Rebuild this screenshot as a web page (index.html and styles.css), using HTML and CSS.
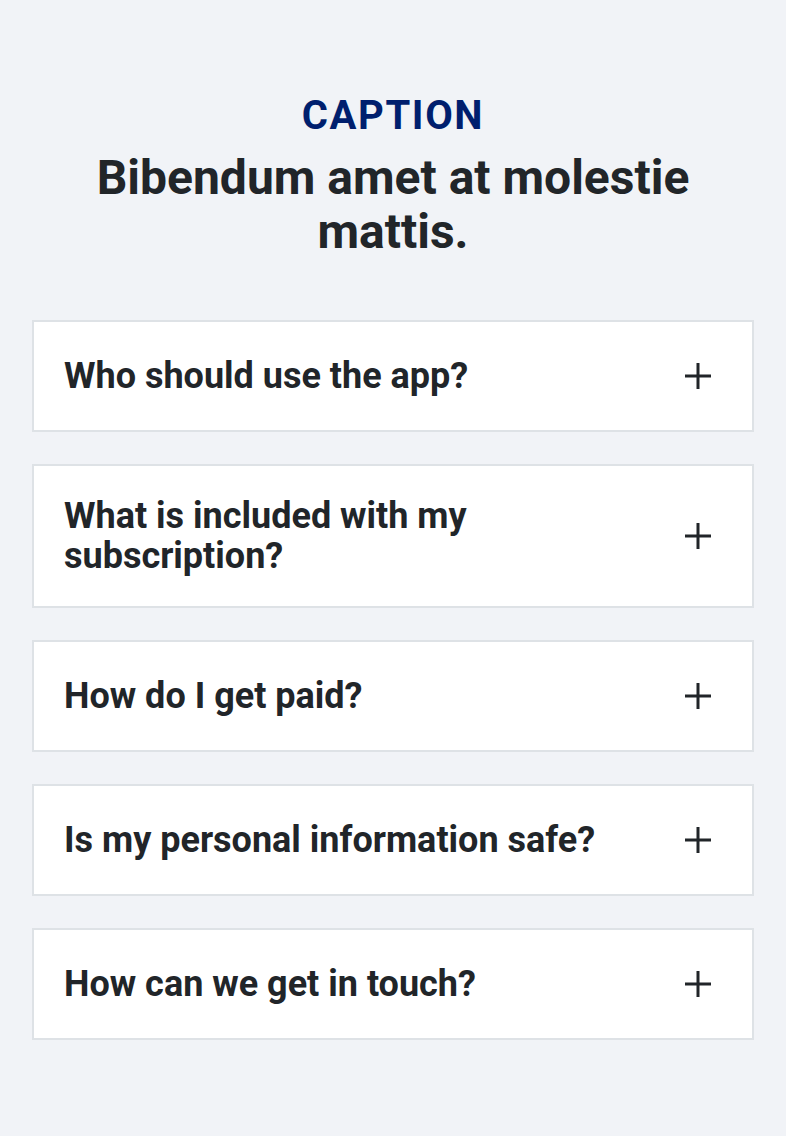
FILE: index.html
```html
<!DOCTYPE html>
<html lang="en">
<head>
<meta charset="utf-8">
<title>FAQ</title>
<link rel="stylesheet" href="styles.css">
</head>
<body>
<section class="faq">
  <header class="faq-head">
    <p class="caption">CAPTION</p>
    <h1 class="title">Bibendum amet at molestie mattis.</h1>
  </header>
  <div class="list">
    <div class="item"><span class="q">Who should use the app?</span><span class="icon"><svg viewBox="0 0 28 28" width="28" height="28"><path d="M14 1v26M1 14h26" stroke="#212529" stroke-width="3" fill="none"/></svg></span></div>
    <div class="item"><span class="q">What is included with my subscription?</span><span class="icon"><svg viewBox="0 0 28 28" width="28" height="28"><path d="M14 1v26M1 14h26" stroke="#212529" stroke-width="3" fill="none"/></svg></span></div>
    <div class="item"><span class="q">How do I get paid?</span><span class="icon"><svg viewBox="0 0 28 28" width="28" height="28"><path d="M14 1v26M1 14h26" stroke="#212529" stroke-width="3" fill="none"/></svg></span></div>
    <div class="item"><span class="q">Is my personal information safe?</span><span class="icon"><svg viewBox="0 0 28 28" width="28" height="28"><path d="M14 1v26M1 14h26" stroke="#212529" stroke-width="3" fill="none"/></svg></span></div>
    <div class="item"><span class="q">How can we get in touch?</span><span class="icon"><svg viewBox="0 0 28 28" width="28" height="28"><path d="M14 1v26M1 14h26" stroke="#212529" stroke-width="3" fill="none"/></svg></span></div>
  </div>
</section>
</body>
</html>
```
FILE: styles.css
```css
html, body {
  margin: 0;
  padding: 0;
  background: #f1f3f7;
  font-family: Roboto, "Liberation Sans", sans-serif;
  color: #212529;
}
.faq {
  padding: 92px 32px 96px;
}
.faq-head {
  text-align: center;
  margin-bottom: 61px;
}
.caption {
  margin: 0;
  font-size: 40px;
  line-height: 48px;
  font-weight: 700;
  letter-spacing: 1.6px;
  color: #001f6e;
}
.title {
  margin: 11px 0 0;
  font-size: 48px;
  line-height: 54px;
  font-weight: 700;
  color: #212529;
}
.list {
  display: flex;
  flex-direction: column;
  gap: 32px;
}
.item {
  display: flex;
  align-items: center;
  justify-content: space-between;
  gap: 24px;
  background: #fff;
  border: 2px solid #dee2e6;
  padding: 30px;
  min-height: 48px;
}
.q {
  font-size: 36px;
  line-height: 40px;
  font-weight: 700;
  max-width: 560px;
}
.icon {
  width: 48px;
  height: 48px;
  display: flex;
  align-items: center;
  justify-content: center;
  flex-shrink: 0;
}
.icon svg { display: block; }
```
